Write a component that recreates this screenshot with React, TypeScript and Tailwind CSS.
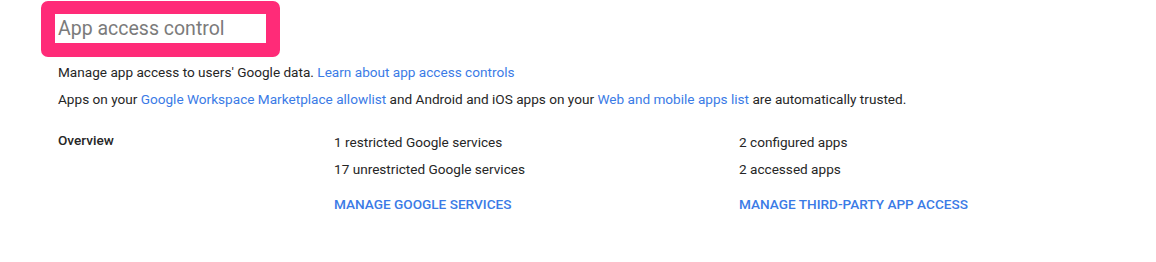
export default function App() {
  const link = "text-[#3b7be6]";
  return (
    <div className="h-[262px] w-[1156px] overflow-hidden bg-white font-['Roboto','Liberation_Sans',sans-serif] text-[13.6px] leading-[20px] text-[#262626]">
      <div className="pl-[41px] pt-[1px]">
        <div className="h-[56px] w-[239px] rounded-[7px] border-[14px] border-b-[14px] border-t-[13px] border-[#ff2b78] bg-white">
          <div className="pl-[3px] text-[19.5px] leading-[29px] text-[#7b7b7b]">App access control</div>
        </div>
      </div>

      <div className="pl-[58px] pt-[5px]">
        <p>
          Manage app access to users' Google data.{" "}
          <a className={link}>Learn about app access controls</a>
        </p>
        <p className="mt-[7px]">
          Apps on your <a className={link}>Google Workspace Marketplace allowlist</a> and Android and iOS apps on your{" "}
          <a className={link}>Web and mobile apps list</a> are automatically trusted.
        </p>

        <div className="mt-[21px] flex">
          <div className="w-[276px] font-medium">Overview</div>
          <div className="w-[405px] pt-[2px]">
            <div>1 restricted Google services</div>
            <div className="mt-[7px]">17 unrestricted Google services</div>
            <a className={`mt-[15px] block font-medium ${link}`}>MANAGE GOOGLE SERVICES</a>
          </div>
          <div className="pt-[2px]">
            <div>2 configured apps</div>
            <div className="mt-[7px]">2 accessed apps</div>
            <a className={`mt-[15px] block font-medium ${link}`}>MANAGE THIRD-PARTY APP ACCESS</a>
          </div>
        </div>
      </div>
    </div>
  );
}
